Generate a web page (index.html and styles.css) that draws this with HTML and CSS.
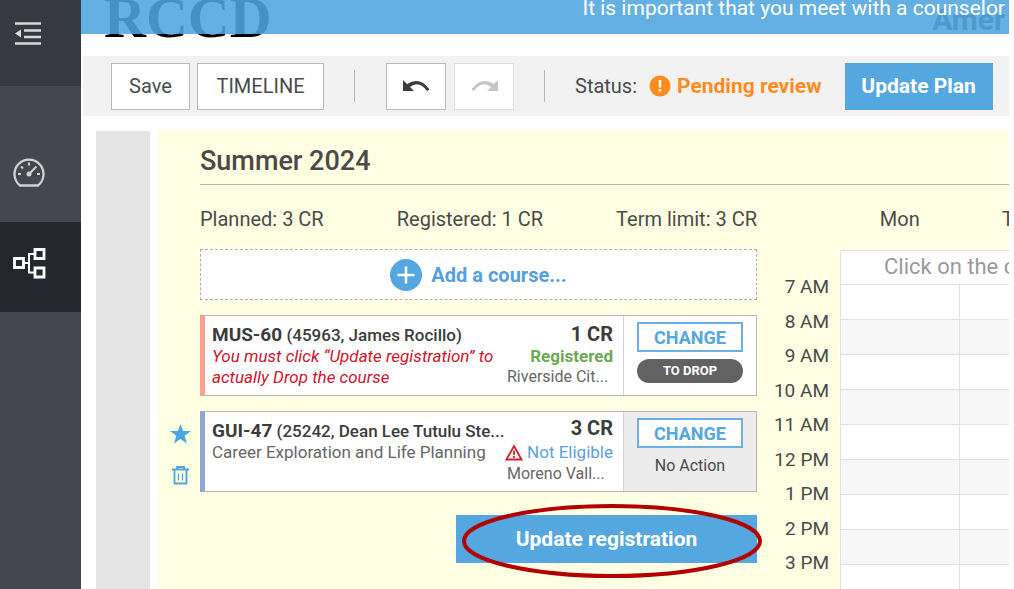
FILE: index.html
```
<!DOCTYPE html>
<html lang="en">
    <head>
        <meta charset="UTF-8">
        <title>RCCD</title>
        <link rel="stylesheet" href="styles.css">
    </head>

    <body>
        <nav class="sidebar">
            <a href="#" class="nav_top" aria-label="Menu">
                <svg width="27" height="24" viewBox="0 0 27 24" fill="none" stroke="#d8dae0" stroke-width="2.300">
                    <path d="M0 1.500h26M9 8.500h17M9 15h17M0 21.500h26"/>
                    <path d="M0 11.500l6-4v8z" fill="#d8dae0" stroke="none"/>
                </svg>
            </a>
            <a href="#" class="nav_item" aria-label="Dashboard">
                <svg width="32" height="30" viewBox="0 0 32 30" fill="none" stroke="#d0d2d8" stroke-width="2.300">
                    <path d="M7 27.500a14.500 14.500 0 1 1 18 0z" stroke-linejoin="round"/>
                    <path d="M16 4.500v3M5 16h3M24 16h3M8 8.500l2 2M16 16l7.500-7.500" stroke-width="2"/>
                    <circle cx="16" cy="16" r="2.500" fill="#d0d2d8" stroke="none"/>
                </svg>
            </a>
            <a href="#" class="nav_item active" aria-label="Plan">
                <svg width="33" height="31" viewBox="0 0 33 31" fill="none" stroke="#fff" stroke-width="2.800">
                    <path d="M1.500 10.500h9v9h-9zM22 1.500h9v9h-9zM22 20h9v9h-9z"/>
                    <path d="M11 15h5M22 6h-6v18.500h6" stroke-width="2"/>
                </svg>
            </a>
        </nav>

        <div class="page">
            <header class="header">
                <div class="logo">RCCD</div>
                <div class="user">Amer</div>
                <div class="banner">It is important that you meet with a counselor</div>
            </header>

            <div class="toolbar">
                <button class="btn save">Save</button>
                <button class="btn timeline">TIMELINE</button>
                <span class="divider"></span>
                <button class="btn icon_btn" aria-label="Undo">
                    <svg width="27" height="12" viewBox="0 0 27 12">
                        <path d="M0 0v11h11l-4-4Q16 0 24 11l2.500-1.500Q17-4 4 4z" fill="#3c3c3c"/>
                    </svg>
                </button>
                <button class="btn icon_btn" disabled aria-label="Redo">
                    <svg width="27" height="12" viewBox="0 0 27 12">
                        <path d="M27 0v11H16l4-4Q11 0 3 11L.5 9.500Q10-4 23 4z" fill="#c4c6c8"/>
                    </svg>
                </button>
                <span class="divider second"></span>
                <span class="status">Status:</span>
                <svg class="alert" width="22" height="22" viewBox="0 0 22 22">
                    <circle cx="11" cy="11" r="10.500" fill="#ff8c1a"/>
                    <path d="M11 5v7.500M11 14v2.500" stroke="#fff" stroke-width="2.500"/>
                </svg>
                <span class="pending">Pending review</span>
                <button class="btn primary update_plan">Update Plan</button>
            </div>

            <main class="content">
                <div class="rail"></div>
                <section class="term">
                    <h2>Summer 2024</h2>
                    <div class="columns">
                        <div class="courses">
                            <div class="stats">
                                <span>Planned: 3 CR</span>
                                <span>Registered: 1 CR</span>
                                <span>Term limit: 3 CR</span>
                            </div>
                            <button class="add">
                                <svg width="32" height="32" viewBox="0 0 32 32">
                                    <circle cx="16" cy="16" r="16" fill="#54a7df"/>
                                    <path d="M16 7.500v17M7.500 16h17" stroke="#fff" stroke-width="2.500"/>
                                </svg>
                                Add a course...
                            </button>

                            <article class="card red">
                                <div class="info">
                                    <div class="name"><b>MUS-60</b> (45963, James Rocillo)</div>
                                    <div class="warning">You must click “Update registration” to actually Drop the course</div>
                                </div>
                                <div class="credit">
                                    <b>1 CR</b>
                                    <span class="registered">Registered</span>
                                    <span class="college">Riverside Cit...</span>
                                </div>
                                <div class="action">
                                    <button class="change">CHANGE</button>
                                    <span class="drop">TO DROP</span>
                                </div>
                            </article>

                            <article class="card blue">
                                <div class="tools">
                                    <button aria-label="Favorite">
                                        <svg width="21" height="20" viewBox="0 0 21 20">
                                            <path d="M10.500 0l2.600 7H21l-6.300 4.700L17 19.500l-6.500-4.600L4 19.500l2.300-7.800L0 7h7.900z" fill="#4ba6e0"/>
                                        </svg>
                                    </button>
                                    <button aria-label="Delete">
                                        <svg width="17" height="19" viewBox="0 0 17 19" fill="none" stroke="#4ba6e0" stroke-width="1.800">
                                            <path d="M0 3.500h17M5 3V1h7v2M2.500 4v13.500h12V4"/>
                                            <path d="M6.500 7.500v7M10.500 7.500v7" stroke-width="1.200"/>
                                        </svg>
                                    </button>
                                </div>
                                <div class="info">
                                    <div class="name"><b>GUI-47</b> (25242, Dean Lee Tutulu Ste...</div>
                                    <div class="desc">Career Exploration and Life Planning</div>
                                </div>
                                <div class="credit">
                                    <b>3 CR</b>
                                    <a href="#" class="eligible">
                                        <svg width="18" height="17" viewBox="0 0 18 17" fill="none" stroke="#d4202c" stroke-width="1.800">
                                            <path d="M9 2l7.500 13.500h-15zM9 6.500v4.500M9 12v2"/>
                                        </svg>
                                        Not Eligible
                                    </a>
                                    <span class="college">Moreno Vall...</span>
                                </div>
                                <div class="action gray">
                                    <button class="change">CHANGE</button>
                                    <span class="none">No Action</span>
                                </div>
                            </article>

                            <div class="submit">
                                <button class="btn primary update_reg">Update registration</button>
                                <!-- hand drawn marker around the button -->
                                <svg class="marker" viewBox="0 0 300 74">
                                    <ellipse cx="150" cy="37" rx="148" ry="35" fill="none" stroke="#b30000" stroke-width="4"/>
                                </svg>
                            </div>
                        </div>

                        <div class="hours">
                            <span>7 AM</span>
                            <span>8 AM</span>
                            <span>9 AM</span>
                            <span>10 AM</span>
                            <span>11 AM</span>
                            <span>12 PM</span>
                            <span>1 PM</span>
                            <span>2 PM</span>
                            <span>3 PM</span>
                        </div>

                        <div class="calendar">
                            <table>
                                <thead>
                                    <tr><th>Mon</th><th>Tue</th></tr>
                                </thead>
                                <tbody>
                                    <tr class="hint"><td colspan="2">Click on the c</td></tr>
                                    <tr><td></td><td></td></tr>
                                    <tr><td></td><td></td></tr>
                                    <tr><td></td><td></td></tr>
                                    <tr><td></td><td></td></tr>
                                    <tr><td></td><td></td></tr>
                                    <tr><td></td><td></td></tr>
                                    <tr><td></td><td></td></tr>
                                    <tr><td></td><td></td></tr>
                                    <tr><td></td><td></td></tr>
                                </tbody>
                            </table>
                        </div>
                    </div>
                </section>
            </main>
        </div>
    </body>
</html>
```
FILE: styles.css
```
* {
    box-sizing: border-box;
}
body {
    display: flex;
    height: 100vh;
    margin: 0;
    padding-right: 5px;
    overflow: hidden;
    background: #fff;
    color: #4a4a4a;
    font-family: Roboto, "Liberation Sans", sans-serif;
    font-size: 20px;
}
button {
    padding: 0;
    font-family: inherit;
    color: inherit;
    cursor: pointer;
}
svg {
    display: block;
    flex: none;
}

/* sidebar */
.sidebar {
    flex: none;
    width: 81px;
    background: #444750;
}
.sidebar a {
    display: flex;
    align-items: center;
    height: 90px;
    padding-left: 13px;
}
.sidebar .nav_top {
    height: 86px;
    margin-bottom: 46px;
    padding: 0 0 18px 15px;
    background: #373942;
}
.sidebar .nav_item {
    padding-bottom: 8px;
}
.sidebar .active {
    background: #25272f;
}

/* header */
.page {
    flex: 1;
    min-width: 0;
}
.header {
    position: relative;
    display: flex;
    justify-content: space-between;
    height: 56px;
    padding: 0 4px 0 23px;
    overflow: hidden;
}
.logo {
    margin-top: -11px;
    color: #000;
    font-family: "Liberation Serif", serif;
    font-size: 58px;
    font-weight: bold;
    line-height: 58px;
}
.user {
    padding-top: 4px;
    font-size: 30px;
    font-weight: bold;
    line-height: 32px;
}
.banner {
    position: absolute;
    top: 0;
    left: 0;
    right: 0;
    height: 34px;
    padding-right: 4px;
    background: rgba(78, 165, 222, 0.88);
    color: #fff;
    font-size: 21px;
    line-height: 16px;
    text-align: right;
}

/* toolbar */
.toolbar {
    display: flex;
    align-items: center;
    height: 60px;
    margin-left: 2px;
    padding-left: 28px;
    background: #f2f2f2;
}
.btn {
    display: flex;
    align-items: center;
    justify-content: center;
    height: 47px;
    border: 1px solid #b8babc;
    background: #fff;
    font-size: 20px;
}
.save {
    width: 79px;
    margin-right: 7px;
}
.timeline {
    width: 127px;
}
.icon_btn {
    width: 60px;
    margin-right: 8px;
}
.icon_btn:disabled {
    border-color: #dcddde;
}
.divider {
    width: 1px;
    height: 32px;
    margin: 0 31px 0 30px;
    background: #b8b8b8;
}
.second {
    margin: 0 30px 0 22px;
}
.alert {
    margin: 0 6px 0 12px;
}
.pending {
    color: #ff8c1f;
    font-size: 21px;
    font-weight: bold;
}
.primary {
    border: none;
    background: #54a7df;
    color: #fff;
    font-size: 21px;
    font-weight: bold;
}
.update_plan {
    width: 148px;
    margin-left: 23px;
}

/* term */
.content {
    display: flex;
    gap: 8px;
    padding: 15px 0 0 15px;
}
.rail {
    width: 54px;
    background: #e4e4e4;
}
.term {
    flex: 1;
    min-width: 0;
    min-height: 460px;
    padding-left: 42px;
    background: #feffe2;
}
h2 {
    height: 54px;
    margin: 0;
    padding-top: 14px;
    border-bottom: 1px solid #b4b6a8;
    font-size: 27px;
    font-weight: 500;
    line-height: 32px;
}
.columns {
    display: grid;
    grid-template-columns: 557px 72px 1fr;
}
.stats {
    display: flex;
    justify-content: space-between;
    padding: 22px 0 18px;
    line-height: 24px;
}
.add {
    display: flex;
    align-items: center;
    justify-content: center;
    gap: 9px;
    width: 100%;
    height: 51px;
    margin-bottom: 15px;
    border: 1px dashed #b0b0b0;
    background: #fff;
    color: #54a0dc;
    font-size: 20px;
    font-weight: bold;
}

/* course cards */
.card {
    position: relative;
    display: flex;
    height: 81px;
    margin-bottom: 15px;
    border: 1px solid #b4b6bc;
    background: #fff;
}
.red {
    border-left: 5px solid #ff9f94;
}
.blue {
    border-left: 5px solid #8fa6d0;
}
.info {
    flex: 1;
    min-width: 0;
    padding: 8px 0 0 7px;
    font-size: 17px;
    line-height: 21px;
}
.name {
    color: #3c3c3c;
    font-weight: 500;
    white-space: nowrap;
}
.name b {
    font-size: 19px;
}
.warning {
    color: #d0142c;
    font-style: italic;
}
.desc,
.college {
    color: #666;
}
.credit {
    display: flex;
    flex-direction: column;
    flex: none;
    align-items: flex-end;
    width: 116px;
    padding: 7px 10px 0 0;
    font-size: 17px;
    line-height: 22px;
    white-space: nowrap;
}
.blue .credit {
    padding-top: 4px;
    line-height: 24px;
}
.credit b {
    color: #3c3c3c;
    font-size: 20px;
}
.credit .registered {
    color: #6aaa50;
    font-weight: bold;
}
.credit .college {
    align-self: flex-start;
    font-size: 16px;
    line-height: 20px;
}
.eligible {
    display: flex;
    align-items: center;
    gap: 4px;
    color: #5a9fe0;
    text-decoration: none;
}
.action {
    display: flex;
    flex-direction: column;
    flex: none;
    align-items: center;
    width: 133px;
    padding-top: 6px;
    border-left: 1px solid #d0d2d8;
    font-size: 16px;
}
.gray {
    background: #ececec;
}
.change {
    width: 106px;
    height: 30px;
    margin-bottom: 7px;
    border: 2px solid #68b1e2;
    background: #fff;
    color: #54a7df;
    font-size: 18px;
    font-weight: bold;
}
.drop {
    width: 106px;
    border-radius: 12px;
    background: #626262;
    color: #fff;
    font-size: 13px;
    font-weight: bold;
    line-height: 24px;
    text-align: center;
}
.none {
    line-height: 22px;
}
.tools {
    position: absolute;
    top: 12px;
    left: -35px;
    display: flex;
    flex-direction: column;
    align-items: center;
    gap: 22px;
}
.tools button {
    border: none;
    background: none;
}
.submit {
    position: relative;
    width: 301px;
    margin: 23px 0 0 auto;
}
.update_reg {
    width: 100%;
    height: 48px;
}
.marker {
    position: absolute;
    top: -11px;
    left: 6px;
    width: 300px;
    height: 74px;
}

/* calendar */
.hours {
    display: flex;
    flex-direction: column;
    justify-content: space-between;
    height: 300px;
    margin-top: 90px;
    font-size: 19px;
    line-height: 24px;
    text-align: right;
}
.calendar {
    min-width: 0;
    margin-left: 11px;
    overflow: hidden;
}
table {
    width: 238px;
    border-collapse: collapse;
    table-layout: fixed;
}
th {
    height: 65px;
    padding: 4px 0 0;
    font-weight: normal;
}
td {
    height: 35px;
    padding: 0;
    border: 1px solid #e2e2e2;
    background: #fff;
}
tbody tr:nth-child(odd) td {
    background: #f7f7f7;
}
tbody tr.hint td {
    height: 34px;
    padding-left: 43px;
    background: #fff;
    color: #999;
    font-size: 22px;
    line-height: 28px;
}
```
